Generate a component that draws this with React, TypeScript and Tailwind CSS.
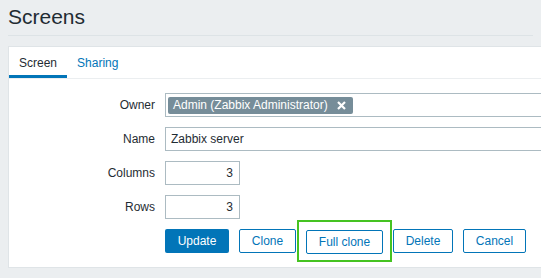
import React from 'react';

const FONT = "font-['Liberation_Sans',Arial,sans-serif]";

const Label: React.FC<{ children: React.ReactNode }> = ({ children }) => (
  <div className="flex h-6 items-center justify-end text-[12px] text-[#1f2c33]">{children}</div>
);

export default function App() {
  return (
    <div className={`${FONT} h-screen w-full overflow-hidden bg-[#ebeef0]`}>
      {/* page header */}
      <div className="px-2 pt-[5px]">
        <h1 className="h-6 text-[21px] leading-6 text-[#1f2c33]">Screens</h1>
        <div className="mt-[6px] h-px bg-[#dde3e6]" />
      </div>

      {/* form panel */}
      <div className="ml-2 mt-[10px] w-[640px] border border-[#dfe4e7] bg-white pb-[13px]">
        <div className="flex h-[32px] border-b border-[#ebeef0]">
          <div className="flex items-center border-b-[3px] border-[#0275b8] px-[10px] pt-[3px] text-[12px] text-[#1f2c33]">
            Screen
          </div>
          <div className="flex items-center px-[10px] pb-[3px] pt-[3px] text-[12px] text-[#0275b8]">Sharing</div>
        </div>

        <div className="mt-[14px] grid grid-cols-[146px_1fr] gap-x-[10px] gap-y-[10px]">
          <Label>Owner</Label>
          <div className="flex h-6 w-[453px] items-center border border-[#acbbc2] px-[2px]">
            <span className="flex h-[17px] items-center gap-[9px] rounded-[2px] bg-[#768d99] pl-[5px] pr-[7px] text-[12px] text-white">
              Admin (Zabbix Administrator)
              <svg width="9" height="9" viewBox="0 0 9 9" className="mt-px">
                <path d="M1 1 L8 8 M8 1 L1 8" stroke="white" strokeWidth="2.2" />
              </svg>
            </span>
          </div>

          <Label>Name</Label>
          <div className="flex h-6 w-[453px] items-center border border-[#acbbc2] px-[5px] text-[12px] text-[#1f2c33]">
            Zabbix server
          </div>

          <Label>Columns</Label>
          <div className="flex h-6 w-[75px] items-center justify-end border border-[#acbbc2] px-[6px] text-[12px] text-[#1f2c33]">
            3
          </div>

          <Label>Rows</Label>
          <div className="flex h-6 w-[75px] items-center justify-end border border-[#acbbc2] px-[6px] text-[12px] text-[#1f2c33]">
            3
          </div>

          <div />
          <div className="flex gap-[10px]">
            <button className="h-6 w-[64px] rounded-[2px] bg-[#0275b8] text-[12px] text-white">Update</button>
            <button className="h-6 w-[57px] rounded-[2px] border border-[#0275b8] bg-white text-[12px] text-[#0275b8]">
              Clone
            </button>
            <span className="relative">
              <button className="h-6 w-[77px] rounded-[2px] border border-[#0275b8] bg-white text-[12px] text-[#0275b8]">
                Full clone
              </button>
              <span className="pointer-events-none absolute -left-[9px] -right-[9px] -top-[9px] -bottom-[8px] border-2 border-[#45c321]" />
            </span>
            <button className="h-6 w-[60px] rounded-[2px] border border-[#0275b8] bg-white text-[12px] text-[#0275b8]">
              Delete
            </button>
            <button className="h-6 w-[63px] rounded-[2px] border border-[#0275b8] bg-white text-[12px] text-[#0275b8]">
              Cancel
            </button>
          </div>
        </div>
      </div>
    </div>
  );
}
